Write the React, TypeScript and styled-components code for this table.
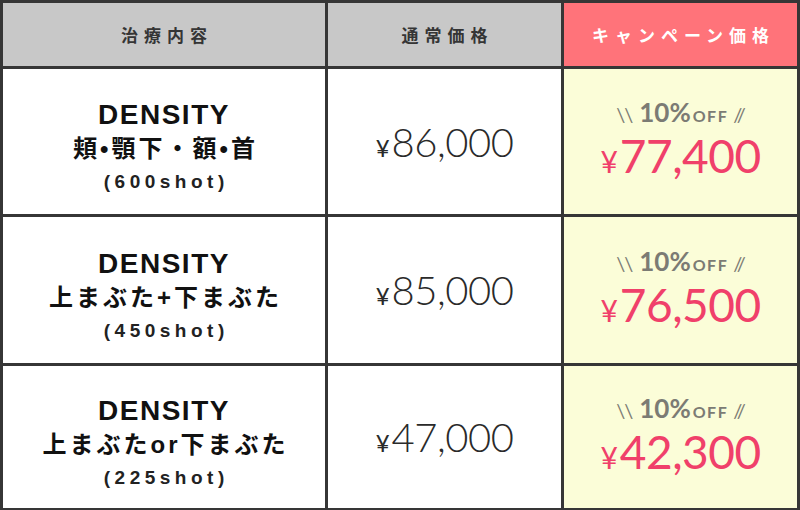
import React from "react";
import styled, { createGlobalStyle } from "styled-components";

const Global = createGlobalStyle`
  html, body { margin: 0; padding: 0; overflow: hidden; background: #ffffff; }
  #root { width: 800px; height: 510px; }
`;

const Table = styled.div`
  box-sizing: border-box;
  width: 800px;
  height: 510px;
  display: grid;
  grid-template-columns: 322px 233px 233px;
  grid-template-rows: 63px 145px 146px 142px;
  gap: 3px;
  padding: 3px 3px 2px 3px;
  background: #363636;
`;

const HeaderCell = styled.div<{ $accent?: boolean }>`
  display: flex;
  align-items: center;
  justify-content: center;
  background: ${(p) => (p.$accent ? "#ff737a" : "#c8c8c8")};
  color: ${(p) => (p.$accent ? "#ffffff" : "#353535")};
  font-family: "Noto Sans CJK JP", sans-serif;
  font-weight: 700;
  font-size: 17px;
  letter-spacing: 6px;
  padding-left: 6px;
`;

const NameCell = styled.div`
  display: flex;
  flex-direction: column;
  align-items: center;
  justify-content: center;
  background: #ffffff;
  color: #111111;
  font-family: "Liberation Sans", "Noto Sans CJK JP", sans-serif;
  font-weight: 700;
  padding-top: 13px;
`;

const Brand = styled.div`
  font-size: 28px;
  letter-spacing: 1.5px;
  line-height: 34px;
`;

const Area = styled.div`
  font-size: 24px;
  letter-spacing: 3px;
  padding-left: 3px;
  line-height: 34px;
`;

const Shots = styled.div`
  font-size: 19px;
  letter-spacing: 4.5px;
  padding-left: 4.5px;
  line-height: 32px;
  color: #222222;
`;

const PriceCell = styled.div`
  display: flex;
  align-items: baseline;
  justify-content: center;
  align-content: center;
  flex-wrap: wrap;
  background: #ffffff;
  color: #2a2a2a;
  font-family: "Lato", sans-serif;
  font-weight: 300;
`;

const Yen = styled.span<{ $size: number }>`
  font-size: ${(p) => p.$size}px;
  font-weight: 400;
  margin-right: 2px;
`;

const Amount = styled.span<{ $size: number }>`
  font-size: ${(p) => p.$size}px;
  letter-spacing: -0.5px;
`;

const CampaignCell = styled.div`
  display: flex;
  flex-direction: column;
  align-items: center;
  justify-content: center;
  background: #fbfdd8;
  font-family: "Lato", sans-serif;
`;

const OffLine = styled.div`
  display: flex;
  align-items: baseline;
  color: #7b7b74;
  line-height: 28px;
`;

const Slash = styled.span`
  font-size: 20px;
  font-weight: 400;
  letter-spacing: -1px;
`;

const Pct = styled.span`
  font-size: 26px;
  font-weight: 700;
  margin-left: 7px;
`;

const OffWord = styled.span`
  font-size: 16px;
  font-weight: 700;
  letter-spacing: 1.5px;
  margin: 0 5px 0 2px;
`;

const Sale = styled.div`
  display: flex;
  align-items: baseline;
  color: #f0406a;
  font-weight: 400;
  line-height: 48px;
  margin-top: 2px;
`;

type Row = { area: string; shots: string; regular: string; sale: string };

const rows: Row[] = [
  { area: "頬•顎下・額•首", shots: "(600shot)", regular: "86,000", sale: "77,400" },
  { area: "上まぶた+下まぶた", shots: "(450shot)", regular: "85,000", sale: "76,500" },
  { area: "上まぶたor下まぶた", shots: "(225shot)", regular: "47,000", sale: "42,300" },
];

export default function App() {
  return (
    <>
      <Global />
      <Table>
        <HeaderCell>治療内容</HeaderCell>
        <HeaderCell>通常価格</HeaderCell>
        <HeaderCell $accent>キャンペーン価格</HeaderCell>
        {rows.map((r) => (
          <React.Fragment key={r.shots}>
            <NameCell>
              <Brand>DENSITY</Brand>
              <Area>{r.area}</Area>
              <Shots>{r.shots}</Shots>
            </NameCell>
            <PriceCell>
              <Yen $size={24}>¥</Yen>
              <Amount $size={40}>{r.regular}</Amount>
            </PriceCell>
            <CampaignCell>
              <OffLine>
                <Slash>{"\\\\"}</Slash>
                <Pct>10%</Pct>
                <OffWord>OFF</OffWord>
                <Slash>{"//"}</Slash>
              </OffLine>
              <Sale>
                <Yen $size={30}>¥</Yen>
                <Amount $size={46}>{r.sale}</Amount>
              </Sale>
            </CampaignCell>
          </React.Fragment>
        ))}
      </Table>
    </>
  );
}
